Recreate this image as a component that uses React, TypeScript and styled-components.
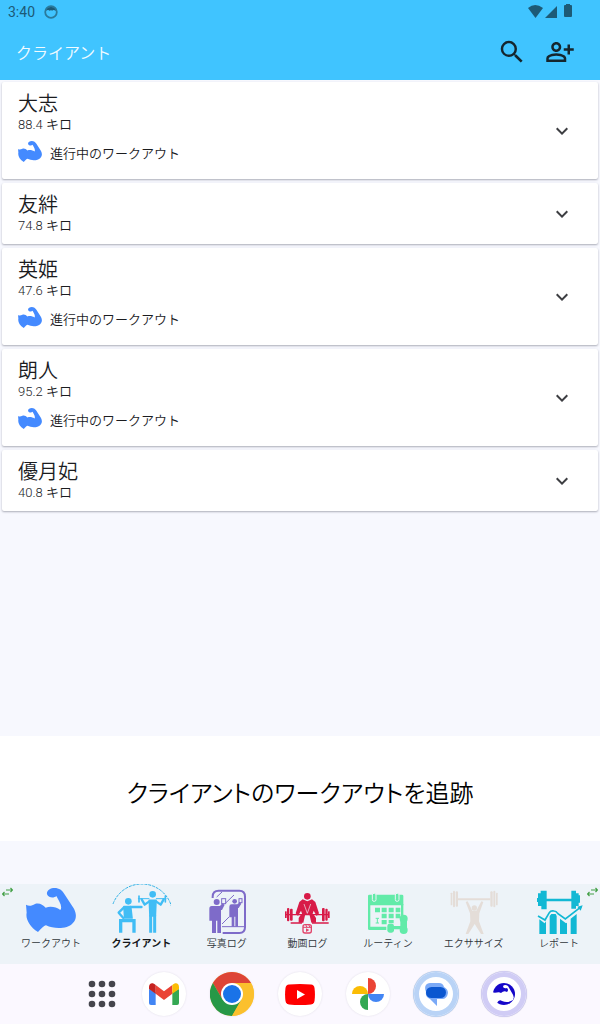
import React from 'react';
import styled, { createGlobalStyle } from 'styled-components';
import { MdSearch, MdOutlinePersonAddAlt, MdExpandMore } from 'react-icons/md';

const GlobalStyle = createGlobalStyle`
  * { box-sizing: border-box; }
  body {
    margin: 0;
    background: #f7f8fe;
    font-family: Roboto, "Noto Sans CJK JP", sans-serif;
    color: #1b1c1f;
  }
  button {
    margin: 0;
    padding: 0;
    border: 0;
    background: none;
    font: inherit;
    color: inherit;
    cursor: pointer;
  }
  svg { display: block; }
`;

const Screen = styled.div`
  display: flex;
  flex-direction: column;
  min-height: 100vh;
`;

const Top = styled.header`
  background: #40c4ff;
`;

const StatusBar = styled.div`
  display: flex;
  align-items: center;
  height: 24px;
  padding: 0 27px 0 8px;
  font-size: 14px;
  color: #1d5a76;
`;

const StatusIcons = styled.div`
  display: flex;
  margin-left: auto;
`;

const CookieMark = styled.svg`
  margin-left: 9px;
`;

const AppBar = styled.div`
  display: flex;
  align-items: center;
  height: 56px;
  padding: 0 25px 0 16px;
`;

const Title = styled.h1`
  flex: 1;
  margin: 0;
  padding-top: 4px;
  font-size: 16px;
  line-height: 24px;
  font-weight: 350;
  color: #f2fbff;
`;

const BarActions = styled.div`
  display: flex;
  gap: 18px;
  color: #15262e;
`;

const ClientList = styled.ul`
  display: flex;
  flex-direction: column;
  flex: 1;
  gap: 4px;
  margin: 0;
  padding: 2px 2px 16px;
  list-style: none;
`;

const Card = styled.li`
  display: flex;
  align-items: center;
  padding: 10px 24px 9px 16px;
  background: #fff;
  border-radius: 2px;
  box-shadow: 0 1px 2px rgba(40, 42, 60, 0.36);
`;

const CardBody = styled.div`
  flex: 1;
`;

const Name = styled.h2`
  margin: 0;
  font-size: 20px;
  line-height: 24px;
  font-weight: 350;
`;

const Weight = styled.p`
  margin: 0;
  font-size: 13px;
  line-height: 18px;
  font-weight: 350;
`;

const Active = styled.div`
  display: flex;
  align-items: center;
  gap: 8px;
  height: 36px;
  font-size: 13px;
  font-weight: 350;
`;

const ExpandButton = styled.button`
  color: #3d3e42;
`;

const Promo = styled.section`
  padding: 39px 16px 33px;
  background: #fff;
  text-align: center;
  font-family: "Noto Sans CJK JP", sans-serif;
  font-size: 24px;
  line-height: 33px;
  font-weight: 350;
  font-feature-settings: "palt";
  color: #000;
`;

const Nav = styled.nav`
  position: relative;
  display: flex;
  justify-content: space-between;
  height: 80px;
  margin-top: 43px;
  padding: 0 16px 0 21px;
  background: #edf3f8;
`;

const NavItem = styled.button<{ $active?: boolean }>`
  position: relative;
  display: flex;
  flex-direction: column;
  align-items: center;
  gap: 2px;
  min-width: 50px;
  padding-top: 4px;
  font-size: 10px;
  line-height: 16px;
  font-weight: ${(p) => (p.$active ? 700 : 350)};
  color: ${(p) => (p.$active ? '#15181b' : '#30363b')};
`;

const ActiveArc = styled.svg`
  position: absolute;
  top: 0;
  left: 0;
  width: 100%;
`;

const ScrollHint = styled.svg<{ $side: 'left' | 'right' }>`
  position: absolute;
  top: 3px;
  ${(p) => p.$side}: 2px;
`;

const Dock = styled.footer`
  display: flex;
  justify-content: center;
  align-items: center;
  gap: 24px;
  height: 60px;
  padding-left: 12px;
  background: #fbf8ff;
`;

const DrawerButton = styled.button`
  display: flex;
  justify-content: center;
  width: 32px;
`;

const DockApp = styled.button<{ $ring?: string }>`
  display: flex;
  align-items: center;
  justify-content: center;
  width: 44px;
  height: 44px;
  border-radius: 50%;
  background: #fff;
  box-shadow: ${(p) =>
    p.$ring
      ? `inset 0 0 0 5px ${p.$ring}, 0 0 0 1px ${p.$ring}, 0 0 1px 1px #c4c4cc`
      : '0 0 2px rgba(60, 60, 80, 0.14)'};
`;

const Bicep = ({ width, height }: { width: number; height: number }) => (
  <svg width={width} height={height} viewBox="0 0 150 138" fill="#448aff" aria-hidden="true">
    <path d="M0 50C9 56 18 53 27 48C40 44 50 50 59 59C74 54 90 57 103 66C111 54 98 38 91 24C84 31 68 30 63 19C61 7 73 0 86 0C99 0 109 7 115 18L144 62C153 80 151 96 140 106C124 124 84 124 60 112C53 113 46 122 36 132C10 116 -2 92 2 74Z" />
  </svg>
);

const IconFrame = ({ children }: { children: React.ReactNode }) => (
  <svg width="50" height="46" viewBox="0 0 150 138" fill="none" overflow="visible" aria-hidden="true">
    {children}
  </svg>
);

const ClientsIcon = () => (
  <IconFrame>
    <g stroke="#40bdf5" strokeLinecap="round" strokeLinejoin="round">
      <circle cx="37" cy="40" r="10" fill="#40bdf5" stroke="none" />
      <path d="M24 56H44L48 90H26Z" fill="#40bdf5" strokeWidth="5" />
      <path d="M44 57H76" strokeWidth="8" />
      <path d="M24 58L8 74L22 90" strokeWidth="7" />
      <path d="M14 134V98H54V134" strokeWidth="10" strokeLinecap="butt" strokeLinejoin="miter" />
      <circle cx="110" cy="19" r="10" fill="#40bdf5" stroke="none" />
      <path d="M100 37H120L118 84H102Z" fill="#40bdf5" strokeWidth="5" />
      <path d="M104 82V134M116 82V134" strokeWidth="9" strokeLinecap="butt" />
      <path d="M100 40L86 50L77 34M120 40L134 50L143 34" strokeWidth="7" />
      <path d="M67 32H99M121 32H150" strokeWidth="3" />
      <path d="M69 24V42M148 24V42" strokeWidth="5" />
    </g>
  </IconFrame>
);

const PhotoLogIcon = () => (
  <IconFrame>
    <g stroke="#7e6bc9" strokeWidth="3">
      <path d="M32 30V26Q32 8 50 8H112Q129 8 129 26V118Q129 135 112 135H62" strokeWidth="6" />
      <path d="M60 116H126M44 27L60 12M72 44L96 21M60 108L82 86" />
      <rect x="59" y="32" width="12" height="15" />
      <rect x="111" y="32" width="9" height="12" />
    </g>
    <g fill="#7e6bc9">
      <circle cx="44" cy="42" r="9" />
      <path d="M29 54H54L61 46L68 50L60 66H57V135H46V98H42V135H30V98H22V62Q22 54 29 54Z" />
      <circle cx="98" cy="40" r="7" />
      <path d="M89 49H106L113 43L118 47L110 60H108V116H100V86H97V116H89V88H82V56Q82 49 89 49Z" />
    </g>
  </IconFrame>
);

const VideoLogIcon = () => (
  <IconFrame>
    <g fill="#d81b48">
      <circle cx="76" cy="25" r="10" />
      <path d="M62 34L76 40L90 34L100 42L111 76L104 84L95 68L91 80H61L57 68L48 84L41 76L52 42Z" />
      <path d="M58 78H70L64 104H50V90ZM94 78H82L88 104H102V90Z" />
      <rect x="15" y="60" width="7" height="40" rx="3" />
      <rect x="24" y="62" width="8" height="36" rx="3" />
      <rect x="9" y="70" width="5" height="20" />
      <rect x="120" y="60" width="8" height="40" rx="3" />
      <rect x="130" y="62" width="7" height="36" rx="3" />
      <rect x="138" y="70" width="5" height="20" />
      <path d="M12 78H140V82H12ZM26 103H60V107H26ZM90 103H140V107H90Z" />
    </g>
    <path d="M66 48L76 76L86 48" stroke="#edf3f8" strokeWidth="2" />
    <rect x="63" y="110" width="25" height="25" rx="6" stroke="#e2446a" strokeWidth="4" fill="#edf3f8" />
    <path d="M63 118H88M71 110L75 118M80 110L84 118" stroke="#e2446a" strokeWidth="3" />
    <path d="M72 121L82 126L72 132Z" fill="#e2446a" />
  </IconFrame>
);

const RoutineIcon = () => (
  <IconFrame>
    <g fill="#62eba9">
      <path d="M15 24Q15 20 19 20H117Q121 20 121 24V52H15Z" />
      <path d="M15 48H22V116H70V126H19Q15 126 15 122ZM114 48H121V84H114Z" />
      <rect x="28" y="16" width="11" height="24" rx="5" stroke="#edf3f8" strokeWidth="3" />
      <rect x="97" y="16" width="11" height="24" rx="5" stroke="#edf3f8" strokeWidth="3" />
      <path d="M36 59H51V73H36ZM56 59H71V73H56ZM77 59H92V73H77ZM98 59H112V73H98ZM56 77H71V91H56ZM77 77H92V91H77ZM98 77H112V91H98ZM56 96H71V109H56ZM77 96H92V106H77Z" />
      <circle cx="122" cy="92" r="12" />
      <circle cx="122" cy="126" r="12" />
      <rect x="73" y="107" width="20" height="27" rx="7" />
      <path d="M88 114H116V124H88ZM112 94H132V126H112Z" />
    </g>
    <path d="M38 91H48M43 91V105M38 105H48" stroke="#62eba9" strokeWidth="3" />
  </IconFrame>
);

const ExercisesIcon = () => (
  <IconFrame>
    <g fill="#e4ddd8">
      <rect x="5" y="14" width="5" height="38" rx="2" />
      <rect x="12" y="8" width="6" height="50" rx="3" />
      <rect x="20" y="10" width="7" height="46" rx="3" />
      <rect x="124" y="10" width="7" height="46" rx="3" />
      <rect x="133" y="8" width="6" height="50" rx="3" />
      <rect x="141" y="14" width="5" height="38" rx="2" />
      <path d="M27 31H124V37H27Z" />
      <circle cx="76" cy="60" r="8" />
      <path d="M50 42L56 40L70 68H82L97 40L103 42L91 76L90 100L104 138H96L77 108L58 138H50L64 100L63 76Z" />
    </g>
  </IconFrame>
);

const ReportsIcon = () => (
  <IconFrame>
    <g fill="#12b8d4">
      <path d="M9 30H12V16H20V8H38V32H112V8H126V16H134V22H138V44H134V54H126V62H112V40H38V64H22V54H12V42H9Z" />
      <path d="M16 94L32 106L36 100V138H16ZM47 84L52 78H65L68 84V138H47ZM78 92L96 106L99 104V138H78ZM110 92L128 78V138H110Z" />
    </g>
    <path d="M12 84L33 96L46 74Q50 67 60 69Q67 69 71 76L94 93L142 56" stroke="#12b8d4" strokeWidth="5" />
    <path d="M130 56L146 52L140 68Z" fill="#12b8d4" />
  </IconFrame>
);

const Arrows = ({ side }: { side: 'left' | 'right' }) => (
  <ScrollHint $side={side} width="11" height="10" viewBox="0 0 11 10" fill="none" stroke="#43a047" strokeWidth="1.2" aria-hidden="true">
    <path d="M4 3H10.500M8.500 1L10.500 3L8.500 5M7 7H.5M2.500 5L.5 7L2.500 9" />
  </ScrollHint>
);

const clients = [
  { name: '大志', weight: '88.4 キロ', active: true },
  { name: '友絆', weight: '74.8 キロ', active: false },
  { name: '英姫', weight: '47.6 キロ', active: true },
  { name: '朗人', weight: '95.2 キロ', active: true },
  { name: '優月妃', weight: '40.8 キロ', active: false },
];

const tabs = [
  { label: 'ワークアウト', icon: <Bicep width={50} height={46} /> },
  { label: 'クライアント', icon: <ClientsIcon />, active: true },
  { label: '写真ログ', icon: <PhotoLogIcon /> },
  { label: '動画ログ', icon: <VideoLogIcon /> },
  { label: 'ルーティン', icon: <RoutineIcon /> },
  { label: 'エクササイズ', icon: <ExercisesIcon /> },
  { label: 'レポート', icon: <ReportsIcon /> },
];

const GmailLogo = () => (
  <svg width="30" height="22" viewBox="0 0 90 66" aria-hidden="true">
    <path d="M0 18L20 28V66H6Q0 66 0 60Z" fill="#4285f4" />
    <path d="M90 18L70 28V66H84Q90 66 90 60Z" fill="#34a853" />
    <path d="M20 6L45 25L70 6V32L45 51L20 32Z" fill="#ea4335" />
    <path d="M0 18V12C0 0 11 -3 20 6V32L0 18Z" fill="#c5221f" />
    <path d="M90 18V12C90 0 79 -3 70 6V32L90 18Z" fill="#fbbc04" />
  </svg>
);

const ChromeLogo = () => (
  <svg width="44" height="44" viewBox="0 0 44 44" aria-hidden="true">
    <circle cx="22" cy="22" r="22" fill="#fbc02d" />
    <path d="M2.9 11A22 22 0 0 1 41 11H22L12.500 27.500Z" fill="#dd4437" />
    <path d="M2.900 11A22 22 0 0 0 22 44L31.500 27.500H12.500Z" fill="#279847" />
    <path d="M22 11H41A22 22 0 0 1 22 44L31.500 27.500Z" fill="#fbc02d" />
    <circle cx="22" cy="22" r="11" fill="#fff" />
    <circle cx="22" cy="22" r="9" fill="#1a73e8" />
  </svg>
);

const YouTubeLogo = () => (
  <svg width="30" height="21" viewBox="0 0 30 21" aria-hidden="true">
    <path d="M4 .6Q15 -.5 26 .6Q29 1 29.500 4Q30.400 10.500 29.500 17Q29 20 26 20.400Q15 21.500 4 20.400Q1 20 .5 17Q-.4 10.500 .5 4Q1 1 4 .6Z" fill="#f00" />
    <path d="M12 6L20 10.500L12 15Z" fill="#fff" />
  </svg>
);

const PhotosLogo = () => (
  <svg width="32" height="32" viewBox="0 0 32 32" aria-hidden="true">
    <path d="M16 0A8 8 0 0 1 16 16Z" fill="#ea4335" />
    <path d="M32 16A8 8 0 0 1 16 16Z" fill="#4285f4" />
    <path d="M16 32A8 8 0 0 1 16 16Z" fill="#34a853" />
    <path d="M0 16A8 8 0 0 1 16 16Z" fill="#fbbc04" />
  </svg>
);

const MessagesLogo = () => (
  <svg width="24" height="24" viewBox="0 0 24 24" aria-hidden="true">
    <path d="M6 1H15Q19 1 20 5Q24 7 24 11Q23 17 18 17H13V24L6 17Q1 15 2 10Q-1 2 6 1Z" fill="#7baaf7" />
    <rect x="2" y="5" width="20" height="11" rx="5.500" fill="#0b57d0" />
  </svg>
);

const FitnessLogo = () => (
  <svg width="24" height="24" viewBox="0 0 24 24" aria-hidden="true">
    <circle cx="12" cy="12" r="11" fill="#1507c9" />
    <path d="M0 10C4 12 6 9 9 11Q12 8 15 10Q17 8 15 6Q11 7 11 4Q13 2 16 4L20 11Q24 17 19 19Q15 21 10 19Q7 17 5 21L0 20Z" fill="#fff" />
  </svg>
);

export default function App() {
  return (
    <Screen>
      <GlobalStyle />
      <Top>
        <StatusBar>
          <span>3:40</span>
          <CookieMark width="14" height="14" viewBox="0 0 14 14" fill="none" aria-hidden="true">
            <circle cx="7" cy="7" r="5.800" stroke="#2a7a9c" strokeWidth="1.800" />
            <path d="M2 6Q3 2 7 2Q11 2 12 6Q9 4 8 6Q7 4 6 6Q4 4 2 6Z" fill="#1d5a76" />
          </CookieMark>
          <StatusIcons>
            <svg width="46" height="16" viewBox="0 0 46 16" fill="#1d5a76" aria-hidden="true">
              <path d="M1 4Q8 -2 16 4L8.500 14Z" />
              <path d="M30 2V14H18Z" />
              <path d="M39 0H43V1H44Q45 1 45 2V12Q45 13 44 13H38Q37 13 37 12V2Q37 1 38 1H39Z" />
            </svg>
          </StatusIcons>
        </StatusBar>
        <AppBar>
          <Title>クライアント</Title>
          <BarActions>
            <button aria-label="検索">
              <MdSearch size={30} />
            </button>
            <button aria-label="クライアントを追加">
              <MdOutlinePersonAddAlt size={30} />
            </button>
          </BarActions>
        </AppBar>
      </Top>

      <ClientList>
        {clients.map((client) => (
          <Card key={client.name}>
            <CardBody>
              <Name>{client.name}</Name>
              <Weight>{client.weight}</Weight>
              {client.active && (
                <Active>
                  <Bicep width={24} height={22} />
                  進行中のワークアウト
                </Active>
              )}
            </CardBody>
            <ExpandButton aria-label={`${client.name}の詳細`}>
              <MdExpandMore size={24} />
            </ExpandButton>
          </Card>
        ))}
      </ClientList>

      <Promo>クライアントのワークアウトを追跡</Promo>

      <Nav>
        {tabs.map((tab) => (
          <NavItem key={tab.label} $active={tab.active}>
            {tab.active && (
              <ActiveArc height="24" viewBox="0 0 60 24" fill="none" aria-hidden="true">
                <path d="M1 20A31 31 0 0 1 60 23" stroke="#2fb0e6" strokeDasharray="3 1" />
              </ActiveArc>
            )}
            {tab.icon}
            {tab.label}
          </NavItem>
        ))}
        <Arrows side="left" />
        <Arrows side="right" />
      </Nav>

      <Dock>
        <DrawerButton aria-label="すべてのアプリ">
          <svg width="28" height="28" viewBox="0 0 28 28" fill="#45454d" aria-hidden="true">
            {[4, 14, 24].map((y) => [4, 14, 24].map((x) => <circle key={`${x}-${y}`} cx={x} cy={y} r="3.300" />))}
          </svg>
        </DrawerButton>
        <DockApp aria-label="Gmail"><GmailLogo /></DockApp>
        <DockApp aria-label="Chrome"><ChromeLogo /></DockApp>
        <DockApp aria-label="YouTube"><YouTubeLogo /></DockApp>
        <DockApp aria-label="フォト"><PhotosLogo /></DockApp>
        <DockApp aria-label="メッセージ" $ring="#b9d3f6"><MessagesLogo /></DockApp>
        <DockApp aria-label="フィットネス" $ring="#d0ccf5"><FitnessLogo /></DockApp>
      </Dock>
    </Screen>
  );
}
